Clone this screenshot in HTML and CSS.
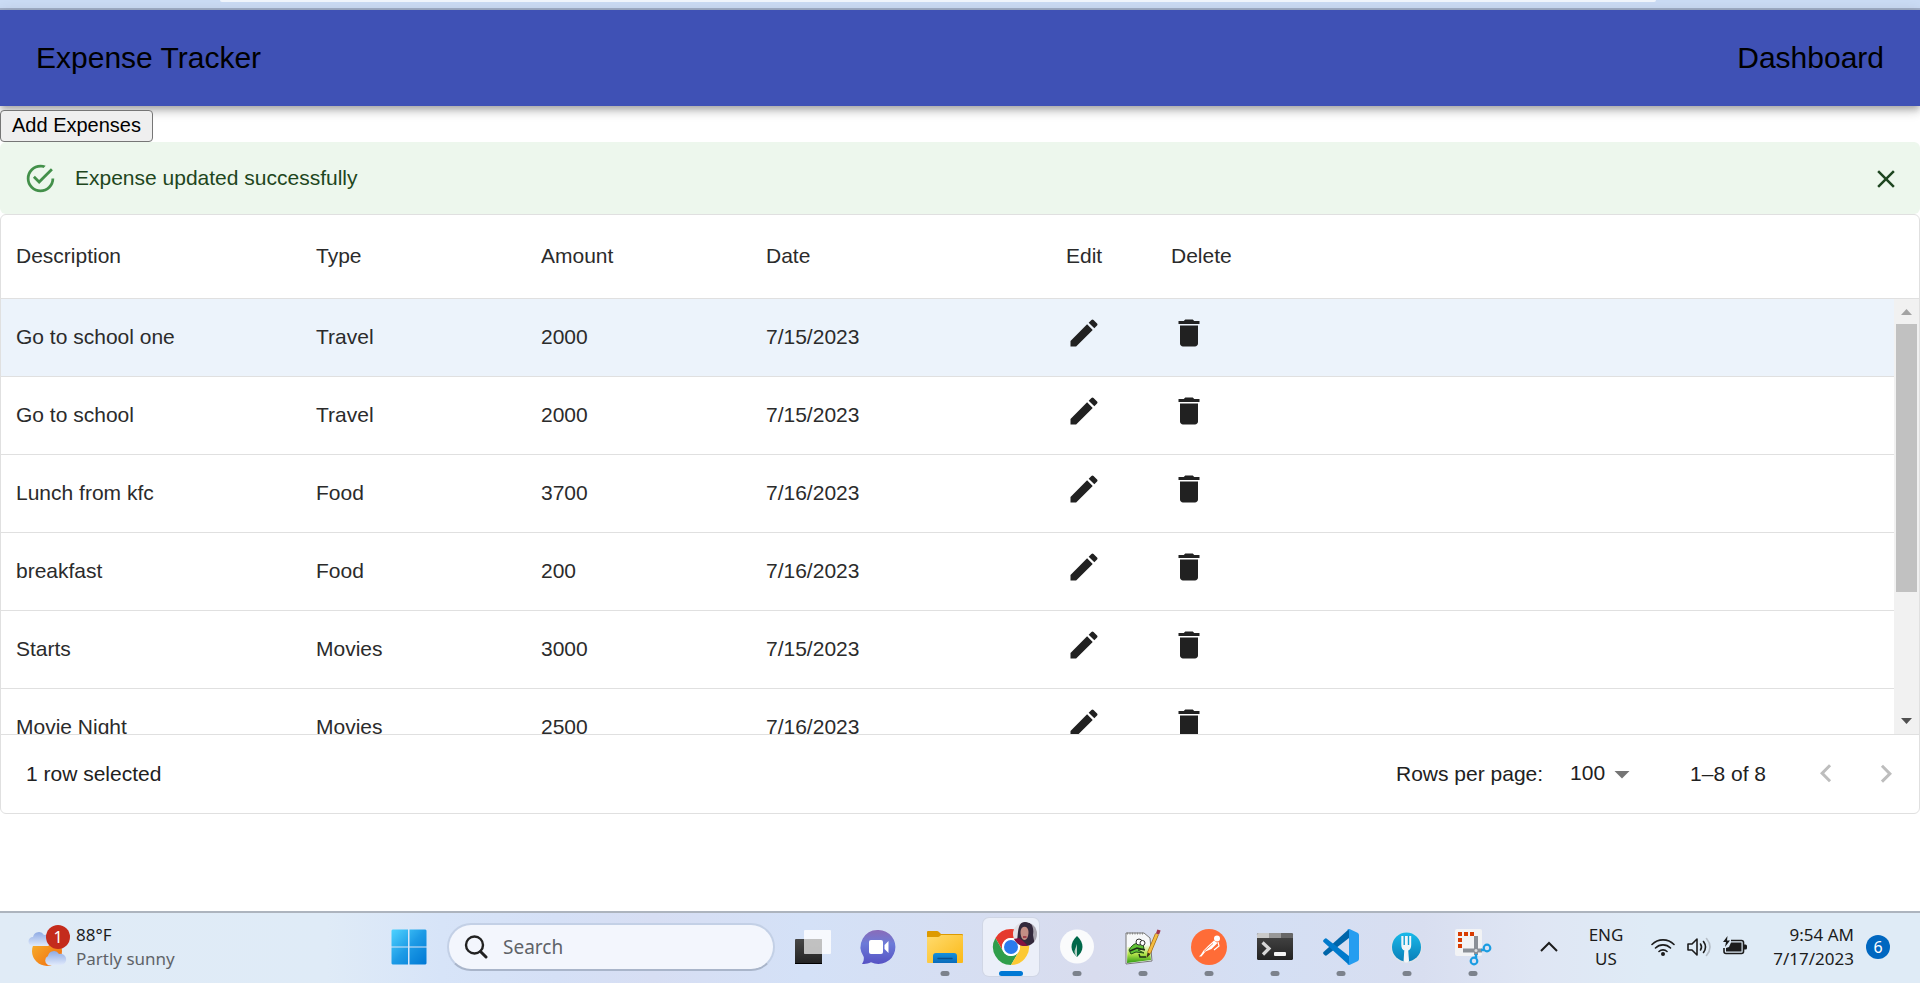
FILE: index.html
```html
<!DOCTYPE html>
<html lang="en">
<head>
<meta charset="utf-8">
<title>Expense Tracker</title>
<link rel="stylesheet" href="styles.css">
</head>
<body>
<svg class="defs" aria-hidden="true">
  <defs>
    <symbol id="pencil" viewBox="0 0 24 24"><path d="M3 17.25V21h3.750L17.810 9.940l-3.750-3.750L3 17.250zM20.710 7.040c.39-.39.39-1.020 0-1.410l-2.340-2.340a.996.996 0 0 0-1.410 0l-1.830 1.830 3.750 3.750 1.830-1.830z"/></symbol>
    <symbol id="trash" viewBox="0 0 24 24"><path d="M6 19c0 1.100.9 2 2 2h8c1.100 0 2-.9 2-2V7H6v12zM19 4h-3.500l-1-1h-5l-1 1H5v2h14V4z"/></symbol>
    <linearGradient id="winG" x1="0" y1="0" x2="1" y2="1"><stop offset="0" stop-color="#4fd3ff"/><stop offset=".5" stop-color="#1d9be6"/><stop offset="1" stop-color="#0078d4"/></linearGradient>
    <linearGradient id="darkG" x1="0" y1="0" x2="0" y2="1"><stop offset="0" stop-color="#474747"/><stop offset="1" stop-color="#222"/></linearGradient>
    <linearGradient id="chatG" x1="0" y1="0" x2="0" y2="1"><stop offset="0" stop-color="#8a6bb8"/><stop offset=".4" stop-color="#6c7bd8"/><stop offset="1" stop-color="#5652c4"/></linearGradient>
    <linearGradient id="folderG" x1="0" y1="0" x2="1" y2="1"><stop offset="0" stop-color="#ffdb6e"/><stop offset="1" stop-color="#fbb917"/></linearGradient>
    <linearGradient id="blueG" x1="0" y1="0" x2="0" y2="1"><stop offset="0" stop-color="#1590dd"/><stop offset="1" stop-color="#0a6bba"/></linearGradient>
    <linearGradient id="grassG" x1="0" y1="0" x2="0" y2="1"><stop offset="0" stop-color="#f4fbe8"/><stop offset=".5" stop-color="#b4e34a"/><stop offset="1" stop-color="#2f9c14"/></linearGradient>
    <linearGradient id="forkG" x1="0" y1="0" x2="0" y2="1"><stop offset="0" stop-color="#19b9ea"/><stop offset="1" stop-color="#0a7fb8"/></linearGradient>
    <linearGradient id="sunG" x1="0" y1="0" x2="1" y2="1"><stop offset="0" stop-color="#f7b731"/><stop offset="1" stop-color="#f0680d"/></linearGradient>
    <linearGradient id="cloudG" x1="0" y1="0" x2="0" y2="1"><stop offset="0" stop-color="#8fabe4"/><stop offset="1" stop-color="#dfe9fb"/></linearGradient>
    <clipPath id="face"><circle cx="32" cy="5" r="12"/></clipPath>
  </defs>
</svg>

<div class="browser-edge"><div class="address-edge"></div></div>

<header class="app-bar">
  <a class="nav-link" href="#">Expense Tracker</a>
  <a class="nav-link" href="#">Dashboard</a>
</header>

<main>
  <div class="actions"><button class="add-button" type="button">Add Expenses</button></div>

  <div class="alert" role="alert">
    <svg class="alert-icon" viewBox="0 0 24 24" aria-hidden="true"><path d="M20,12A8,8 0 0,1 12,20A8,8 0 0,1 4,12A8,8 0 0,1 12,4C12.760,4 13.500,4.110 14.200,4.310L15.770,2.740C14.610,2.260 13.340,2 12,2A10,10 0 0,0 2,12A10,10 0 0,0 12,22A10,10 0 0,0 22,12M7.910,10.080L6.500,11.500L11,16L21,6L19.590,4.580L11,13.170L7.910,10.080Z"/></svg>
    <span class="alert-text">Expense updated successfully</span>
    <button class="icon-button close" type="button" aria-label="Close"><svg viewBox="0 0 24 24"><path d="M19 6.410L17.590 5 12 10.590 6.410 5 5 6.410 10.590 12 5 17.590 6.410 19 12 13.410 17.590 19 19 17.590 13.410 12z"/></svg></button>
  </div>

  <section class="grid">
    <div class="grid-main">
      <table class="expenses">
        <thead>
          <tr><th class="wide">Description</th><th class="mid">Type</th><th class="mid">Amount</th><th class="wide">Date</th><th class="slim">Edit</th><th class="slim">Delete</th></tr>
        </thead>
        <tbody>
          <tr class="selected"><td class="wide">Go to school one</td><td class="mid">Travel</td><td class="mid">2000</td><td class="wide">7/15/2023</td><td class="slim"><button class="icon-button" type="button" aria-label="Edit"><svg><use href="#pencil"/></svg></button></td><td class="slim"><button class="icon-button" type="button" aria-label="Delete"><svg><use href="#trash"/></svg></button></td></tr>
          <tr><td class="wide">Go to school</td><td class="mid">Travel</td><td class="mid">2000</td><td class="wide">7/15/2023</td><td class="slim"><button class="icon-button" type="button" aria-label="Edit"><svg><use href="#pencil"/></svg></button></td><td class="slim"><button class="icon-button" type="button" aria-label="Delete"><svg><use href="#trash"/></svg></button></td></tr>
          <tr><td class="wide">Lunch from kfc</td><td class="mid">Food</td><td class="mid">3700</td><td class="wide">7/16/2023</td><td class="slim"><button class="icon-button" type="button" aria-label="Edit"><svg><use href="#pencil"/></svg></button></td><td class="slim"><button class="icon-button" type="button" aria-label="Delete"><svg><use href="#trash"/></svg></button></td></tr>
          <tr><td class="wide">breakfast</td><td class="mid">Food</td><td class="mid">200</td><td class="wide">7/16/2023</td><td class="slim"><button class="icon-button" type="button" aria-label="Edit"><svg><use href="#pencil"/></svg></button></td><td class="slim"><button class="icon-button" type="button" aria-label="Delete"><svg><use href="#trash"/></svg></button></td></tr>
          <tr><td class="wide">Starts</td><td class="mid">Movies</td><td class="mid">3000</td><td class="wide">7/15/2023</td><td class="slim"><button class="icon-button" type="button" aria-label="Edit"><svg><use href="#pencil"/></svg></button></td><td class="slim"><button class="icon-button" type="button" aria-label="Delete"><svg><use href="#trash"/></svg></button></td></tr>
          <tr><td class="wide">Movie Night</td><td class="mid">Movies</td><td class="mid">2500</td><td class="wide">7/16/2023</td><td class="slim"><button class="icon-button" type="button" aria-label="Edit"><svg><use href="#pencil"/></svg></button></td><td class="slim"><button class="icon-button" type="button" aria-label="Delete"><svg><use href="#trash"/></svg></button></td></tr>
        </tbody>
      </table>
      <div class="scroll-column">
        <div class="scroll-head"></div>
        <div class="scrollbar">
          <svg class="scroll-arrow" viewBox="0 0 25 25"><path d="M7 16l5.500-6 5.500 6z" fill="#a3a3a3"/></svg>
          <div class="scroll-track"><div class="scroll-thumb"></div></div>
          <svg class="scroll-arrow" viewBox="0 0 25 25"><path d="M7 9h11l-5.500 6z" fill="#505050"/></svg>
        </div>
      </div>
    </div>
    <footer class="grid-footer">
      <span class="row-count">1 row selected</span>
      <label class="rows-label" for="page-size">Rows per page:</label>
      <span class="select-box">
        <select id="page-size" class="page-size"><option>100</option></select>
        <svg class="select-arrow" viewBox="0 0 24 24" aria-hidden="true"><path d="M7 10l5 5 5-5z"/></svg>
      </span>
      <span class="range">1–8 of 8</span>
      <button class="icon-button page" type="button" disabled aria-label="Previous page"><svg viewBox="0 0 24 24"><path d="M15.410 16.090l-4.580-4.590 4.580-4.590L14 5.500l-6 6 6 6z"/></svg></button>
      <button class="icon-button page" type="button" disabled aria-label="Next page"><svg viewBox="0 0 24 24"><path d="M8.590 16.340l4.580-4.590-4.580-4.590L10 5.750l6 6-6 6z"/></svg></button>
    </footer>
  </section>
</main>

<div class="taskbar">
  <button class="weather" type="button">
    <svg class="weather-icon" viewBox="0 0 42 42" aria-hidden="true">
      <circle cx="19" cy="26" r="15" fill="url(#sunG)"/>
      <path d="M5 21a4.500 4.500 0 0 1 0-9 6 6 0 0 1 11-2 5.500 5.500 0 0 1 4 11z" fill="url(#cloudG)"/>
      <path d="M20 40a5 5 0 0 1 0-9 6 6 0 0 1 11-2 5.500 5.500 0 0 1 3 11z" fill="url(#cloudG)"/>
      <circle cx="30" cy="12" r="12" fill="#c42b1c"/>
      <text class="badge-text" x="30" y="18">1</text>
    </svg>
    <span class="weather-text"><span>88°F</span><span class="muted">Partly sunny</span></span>
  </button>

  <div class="apps">
    <button class="app" type="button" aria-label="Start"><svg viewBox="0 0 36 36"><path d="M1.500.5H17v17H.5v-16zM18.500.5h16l1 1v16h-17zM.5 18.500H17v17H1.500l-1-1zM18.500 18.500h17v16l-1 1h-16z" fill="url(#winG)"/></svg></button>
    <label class="search">
      <svg viewBox="0 0 24 24" aria-hidden="true"><circle cx="10.500" cy="10" r="8.500" fill="none" stroke="#222" stroke-width="2.400"/><path d="M16.500 16.500l5.500 5.500" stroke="#222" stroke-width="3" stroke-linecap="round"/></svg>
      <input type="text" placeholder="Search" aria-label="Search">
    </label>
    <button class="app" type="button" aria-label="Task view"><svg viewBox="0 0 36 36"><rect x="0" y="10" width="27" height="25" rx="1" fill="url(#darkG)"/><path d="M0 34h27v1H0z" fill="#000"/><rect x="9" y="1" width="27" height="24" rx="1" fill="#fff" fill-opacity=".8"/><path d="M9 10h18v15H9z" fill="#a9a9a9" fill-opacity=".5"/></svg></button>
    <button class="app" type="button" aria-label="Chat"><svg viewBox="0 0 36 36"><path d="M17.500 1a17 17 0 1 1-7.500 32.300c-3 1.700-6 1.800-9 1.600 1.500-2.500 2-4 1.800-7A17 17 0 0 1 17.500 1z" fill="url(#chatG)"/><rect x="8" y="11" width="14" height="14" rx="2" fill="#fff"/><path d="M23.500 16l4-4v12l-4-4z" fill="#fff"/></svg></button>
    <button class="app running" type="button" aria-label="File Explorer"><svg viewBox="0 0 36 36"><path d="M0 3q0-1 1-1h9q1 0 2 1l2 2h21q1 0 1 1v6H0z" fill="#dd9a00"/><path d="M0 8h11q1 0 2-1l1-1h21q1 0 1 1v26q0 1-1 1H1q-1 0-1-1z" fill="url(#folderG)"/><path d="M6 34v-7q0-3 3-3h18q3 0 3 3v7z" fill="url(#blueG)"/><path d="M11 29.500h14" stroke="#0b4f8c" stroke-width="1.400" stroke-linecap="round"/></svg></button>
    <button class="app running active" type="button" aria-label="Chrome"><svg viewBox="0 0 36 36">
      <circle cx="18" cy="18" r="18" fill="#fff"/>
      <path d="M18 9H33.600A18 18 0 0 0 2.410 9L10.200 22.500A9 9 0 0 1 18 9z" fill="#e53a2e"/>
      <path d="M10.200 22.500L2.410 9A18 18 0 0 0 18 36L25.800 22.500A9 9 0 0 1 10.200 22.500z" fill="#2f9e4b"/>
      <path d="M25.800 22.500L18 36A18 18 0 0 0 33.590 9H18A9 9 0 0 1 25.800 22.500z" fill="#fcc934"/>
      <circle cx="18" cy="18" r="9" fill="#fff"/><circle cx="18" cy="18" r="7" fill="#2a7bee"/>
      <g clip-path="url(#face)"><path d="M20-7h24v24H20z" fill="#e3e1e6"/><path d="M38-7h6v24h-6z" fill="#a9a5ae"/><path d="M23 17C26 9 23-6 31-7c9-1 10 7 9 13l2 11z" fill="#33293c"/><path d="M27.500 3c0-7 8-7 8 0 0 5-2 8-4 8s-4-3-4-8z" fill="#c48e85"/><path d="M19 17l1-7 6-1 4 3 5 5z" fill="#84123f"/><path d="M30 8h3.500" stroke="#97293c" stroke-width="1.300"/></g>
    </svg></button>
    <button class="app running" type="button" aria-label="MongoDB Compass"><svg viewBox="0 0 36 36"><circle cx="18" cy="17.500" r="17" fill="#fafbfc"/><path d="M18 7c4 4 5.500 7 5.500 11S21 25 18 28c-3-3-5.500-6-5.500-10S14 11 18 7z" fill="#00684a"/><path d="M18 15v13c-1.500-1.500-2.500-3-2.500-6z" fill="#b5cfc4"/></svg></button>
    <button class="app running" type="button" aria-label="Notepad++"><svg viewBox="0 0 36 36"><path d="M1 4h18l6 5 2 23-26 3z" fill="#f7f8f9" stroke="#777"/><path d="M2.500 18l22-2 1.500 15-24 3z" fill="url(#grassG)"/><path d="M2 4.500h17" stroke="#888" stroke-width="2" stroke-dasharray="1 1.500"/><path d="M4 21c4-7 9-8 14-6l1 5-6 1 6 3-8-1-5 2z" fill="#61c336" stroke="#214f16"/><circle cx="14" cy="13" r="3" fill="#fff" stroke="#333"/><circle cx="17.500" cy="14" r="2.500" fill="#fff" stroke="#333"/><path d="M5 22l7-3 8 2M14 25l1 3h6" fill="none" stroke="#1d2d16" stroke-width="1.400"/><path d="M32 5l-8 19" stroke="#a16a12" stroke-width="4"/><path d="M32 5l-8 19" stroke="#f4bc41" stroke-width="2.600"/><path d="M34 1l-1.500 4" stroke="#a4374b" stroke-width="3.500"/><path d="M22.500 23.500l3 1.500-4 4z" fill="#443018"/></svg></button>
    <button class="app running" type="button" aria-label="Postman"><svg viewBox="0 0 36 36"><circle cx="18" cy="18" r="18" fill="#ff6c37"/><circle cx="26" cy="9.500" r="3" fill="#fff"/><path d="M23 11.500l3.500 2.500-6 6-6 2.500-4 5H8l2-2 2.500-4 5-5z" fill="#fff"/><path d="M27 13l1 4-5 4" fill="none" stroke="#fff" stroke-width="1.200"/><path d="M13 22.500l9-8" stroke="#ff6c37" stroke-width=".8"/></svg></button>
    <button class="app running" type="button" aria-label="Terminal"><svg viewBox="0 0 36 36"><rect y="4" width="36" height="27" rx="1.500" fill="url(#darkG)"/><path d="M0 9V5.500Q0 4 1.500 4H12v5z" fill="#cacaca"/><path d="M12 4h12v5H12z" fill="#989898"/><path d="M24 4h10.500Q36 4 36 5.500V9H24z" fill="#676767"/><path d="M5.500 13.500l6.500 6-6 6" fill="none" stroke="#d7d7d7" stroke-width="3.200"/><rect x="17" y="23" width="12" height="4" rx="1" fill="#f3f3f3"/></svg></button>
    <button class="app running" type="button" aria-label="Visual Studio Code"><svg viewBox="0 0 36 36"><path d="M26 0v9L3.500 26.500Q2.500 27 1.500 26l-1-1q-1-1 0-2z" fill="#0065a9"/><path d="M26 36v-9L3.500 9.500Q2.500 9 1.500 10l-1 1q-1 1 0 2z" fill="#007acc"/><path d="M26.500 0L34.500 3.800Q36 4.500 36 6v24q0 1.500-1.500 2.200L26.500 36q-1.500.2-2.500-1 2 1 2-1V2q0-2-2-1 1-1.200 2.500-1z" fill="#259df0"/></svg></button>
    <button class="app running" type="button" aria-label="Fork"><svg viewBox="0 0 36 36"><circle cx="17.500" cy="18.500" r="15.500" fill="#dfe4ea"/><circle cx="17.500" cy="18" r="14.500" fill="url(#forkG)"/><path d="M13 7v9q0 4 3 5l-.7 11q2 1.500 4 0L18.500 21q3-1 3-5V7M17.500 7v11" fill="#f4f6f8" stroke="#f4f6f8" stroke-width="1.400"/><path d="M15.200 7v9M19.500 7v9" stroke="#129fd2" stroke-width="1.400"/></svg></button>
    <button class="app running" type="button" aria-label="Snipping Tool"><svg viewBox="0 0 36 36"><rect width="27" height="27" rx="2" fill="#f2f3f5"/><path d="M3 3h4v4H3zM9 3h4v4H9zM15 3h4v4h-4zM3 9h4v4H3zM3 15h4v4H3z" fill="#d83b01"/><path d="M21 7v19M8 21.500h19" stroke="#8b9097" stroke-width="4"/><circle cx="21" cy="21.500" r="1.500" fill="#ddd"/><circle cx="19" cy="32" r="3.300" fill="none" stroke="#1b9de2" stroke-width="2.200"/><circle cx="32" cy="19" r="3.300" fill="none" stroke="#1b9de2" stroke-width="2.200"/><path d="M21 25v4M26 21h3" stroke="#1b9de2" stroke-width="2.500"/></svg></button>
  </div>

  <div class="tray">
    <button class="tray-button chevron" type="button" aria-label="Show hidden icons"><svg viewBox="0 0 24 24"><path d="M4 16l8-8 8 8" fill="none" stroke="#1c1c1c" stroke-width="2"/></svg></button>
    <button class="tray-button language" type="button"><span>ENG</span><span>US</span></button>
    <button class="tray-button status" type="button" aria-label="Network, volume and battery">
      <svg viewBox="0 0 24 24"><g fill="none" stroke="#1c1c1c" stroke-width="1.600" stroke-linecap="round"><path d="M1 9.500a15.500 15.500 0 0 1 22 0M4.500 13a10.600 10.600 0 0 1 15 0M8 16.500a5.700 5.700 0 0 1 8 0"/></g><circle cx="12" cy="19" r="2" fill="#1c1c1c"/></svg>
      <svg viewBox="0 0 24 24"><g fill="none" stroke="#1c1c1c" stroke-width="1.600" stroke-linejoin="round" stroke-linecap="round"><path d="M1 9h4l5-5v16l-5-5H1zM13.500 9q2 3 0 6M16.500 6.500q4 5.500 0 11"/><path d="M19.500 3.500q7 8.500 0 17" stroke="#b5bdc6"/></g></svg>
      <svg viewBox="0 0 24 24"><path d="M8 5.500h10.500q2 0 2 2v9q0 2-2 2H3q-2 0-2-2V13" fill="none" stroke="#1c1c1c" stroke-width="1.600"/><path d="M8 7.500h10.500v9H3V13l3-1zM21 9.500h1.500q1.500 0 1.500 1.500v2q0 1.500-1.500 1.500H21z" fill="#1c1c1c"/><path d="M4.500 1L0 7h3l-1 5 5-6.500H4z" fill="#1c1c1c"/></svg>
    </button>
    <button class="tray-button clock" type="button"><span>9:54 AM</span><span>7/17/2023</span></button>
    <button class="notifications" type="button">6</button>
  </div>
</div>
</body>
</html>
```

FILE: styles.css
```css
* {
  box-sizing: border-box;
}

body {
  display: flex;
  flex-direction: column;
  min-height: 100vh;
  margin: 0;
  background: #fff;
  color: #212121;
  font-family: "Liberation Sans", Arial, sans-serif;
  font-size: 21px;
  line-height: 30px;
}

button {
  font-family: inherit;
}

.defs {
  display: block;
  width: 0;
  height: 0;
}

/* Browser frame */
.browser-edge {
  height: 10px;
  padding: 0 264px 0 220px;
  background: #cbdcf5;
  border-bottom: 2px solid #a3b0c9;
}

.address-edge {
  height: 2px;
  background: #f1f6fd;
  border-radius: 0 0 12px 12px;
}

/* Header */
.app-bar {
  display: flex;
  align-items: center;
  justify-content: space-between;
  height: 96px;
  padding: 0 36px;
  background: #3f51b5;
  box-shadow: 0 3px 6px -1px rgba(0, 0, 0, 0.2), 0 6px 8px rgba(0, 0, 0, 0.14), 0 2px 15px rgba(0, 0, 0, 0.12);
}

.nav-link {
  color: #000;
  font-size: 30px;
  line-height: 48px;
  text-decoration: none;
}

.actions {
  display: flex;
  padding-top: 4px;
}

.add-button {
  height: 32px;
  padding: 0 11px 2px;
  background: #efefef;
  border: 1px solid #767676;
  border-radius: 4px;
  color: #000;
  font-size: 20px;
}

/* Alert */
.alert {
  display: flex;
  align-items: center;
  height: 72px;
  padding: 0 19px 0 24px;
  background: #edf7ed;
  border-radius: 6px;
  color: #1e4620;
}

.alert-icon {
  width: 33px;
  height: 33px;
  margin-right: 18px;
  fill: #43904a;
}

.alert-text {
  flex: 1;
}

.icon-button {
  display: block;
  padding: 0;
  background: none;
  border: 0;
  color: inherit;
}

.icon-button svg {
  display: block;
  width: 36px;
  height: 36px;
  fill: currentColor;
}

.close {
  padding-top: 2px;
}

.close svg {
  width: 30px;
  height: 30px;
}

/* Data grid */
.grid {
  border: 1px solid #e0e0e0;
  border-radius: 6px;
}

.grid-main {
  display: flex;
}

.expenses {
  display: block;
  flex: 1;
}

.expenses thead {
  display: block;
}

.expenses tbody {
  display: block;
  height: 435px;
  overflow: hidden;
}

.expenses tr {
  display: flex;
  align-items: center;
  height: 78px;
  border-bottom: 1px solid #e0e0e0;
}

.expenses thead tr,
.scroll-head {
  height: 84px;
  border-bottom: 1px solid #e0e0e0;
}

.expenses .selected {
  background: #ecf3fb;
}

.expenses th,
.expenses td {
  padding: 0 15px 2px;
  color: #2b2b2b;
  font-weight: 400;
  text-align: left;
}

.expenses td .icon-button {
  padding-bottom: 7px;
  color: #212121;
}

.wide {
  width: 300px;
}

.mid {
  width: 225px;
}

.slim {
  width: 105px;
}

.scroll-column {
  width: 25px;
}

.scrollbar {
  display: flex;
  flex-direction: column;
  height: 435px;
  background: #f1f1f1;
}

.scroll-arrow {
  display: block;
  width: 25px;
  height: 25px;
}

.scroll-track {
  flex: 1;
  padding: 0 2px;
}

.scroll-thumb {
  height: 268px;
  background: #c1c1c1;
}

.grid-footer {
  display: flex;
  align-items: center;
  height: 79px;
  padding: 0 15px 0 25px;
  border-top: 1px solid #e0e0e0;
}

.row-count {
  flex: 1;
}

.select-box {
  display: flex;
  align-items: center;
  margin-left: 27px;
}

.page-size {
  appearance: none;
  width: 36px;
  padding: 0 0 2px;
  background: none;
  border: 0;
  color: inherit;
  font: inherit;
}

.select-arrow {
  width: 36px;
  height: 36px;
  margin-left: -2px;
  fill: #757575;
}

.range {
  margin: 0 42px 0 50px;
}

.page {
  color: #bdbdbd;
}

.page + .page {
  margin-left: 24px;
}

/* Taskbar */
.taskbar {
  display: flex;
  align-items: center;
  height: 72px;
  margin-top: auto;
  padding: 0 30px 2px 28px;
  border-top: 2px solid #adb4be;
  background: linear-gradient(90deg, #e0ebf6 0%, #dfebf7 17%, #d7e4f8 23%, #d5e0f6 29%, #d7def3 34%, #d4e1f7 42%, #d8dcee 57%, #d4dff4 66%, #d8def0 74%, #dfe6f4 80%, #dfebf6 86%, #dfebf6 100%);
  color: #1c1c1c;
  font-family: "Noto Sans", "Open Sans", sans-serif;
}

.weather,
.tray-button {
  display: flex;
  align-items: center;
  padding: 0;
  background: none;
  border: 0;
  color: inherit;
  font-size: 17px;
  line-height: 24px;
}

.weather {
  flex: 1;
}

.weather-icon {
  width: 42px;
  height: 42px;
  margin: 0 6px 2px 0;
}

.badge-text {
  fill: #fff;
  font-size: 16px;
  text-anchor: middle;
}

.weather-text {
  display: flex;
  flex-direction: column;
  text-align: left;
  white-space: nowrap;
}

.muted {
  color: #5f6368;
}

.apps {
  display: flex;
  align-items: center;
}

.app {
  position: relative;
  display: flex;
  align-items: center;
  justify-content: center;
  width: 56px;
  height: 58px;
  margin: 0 5px;
  padding: 0;
  background: none;
  border: 0;
  border-radius: 6px;
}

.app svg {
  width: 36px;
  height: 36px;
  overflow: visible;
}

.running::after {
  content: "";
  position: absolute;
  bottom: 0;
  left: 50%;
  width: 9px;
  height: 5px;
  background: #7c828c;
  border-radius: 3px;
  transform: translateX(-50%);
}

.active {
  background: #ebeff9;
  box-shadow: 0 0 0 1px #d0d6e5;
}

.active::after {
  width: 24px;
  background: #0078d4;
}

.search {
  display: flex;
  align-items: center;
  gap: 15px;
  width: 328px;
  height: 48px;
  margin: 0 5px;
  padding: 0 15px;
  background: #f3f6fd;
  border: 2px solid #c3d0e6;
  border-bottom-color: #a9b5ca;
  border-radius: 24px;
}

.search svg {
  width: 24px;
  height: 24px;
}

.search input {
  flex: 1;
  min-width: 0;
  padding: 0;
  background: none;
  border: 0;
  color: #1c1c1c;
  font-family: inherit;
  font-size: 19px;
}

.search input::placeholder {
  color: #5f6368;
}

.tray {
  display: flex;
  align-items: center;
  padding-left: 31px;
}

.tray-button svg {
  width: 24px;
  height: 24px;
}

.language {
  flex-direction: column;
  width: 40px;
  margin-left: 25px;
}

.status {
  gap: 12px;
  margin-left: 25px;
}

.clock {
  flex-direction: column;
  align-items: flex-end;
  width: 107px;
}

.notifications {
  width: 24px;
  height: 24px;
  margin-left: 12px;
  padding: 0;
  background: #0067c0;
  border: 0;
  border-radius: 50%;
  color: #fff;
  font-size: 16px;
  line-height: 24px;
}
```
